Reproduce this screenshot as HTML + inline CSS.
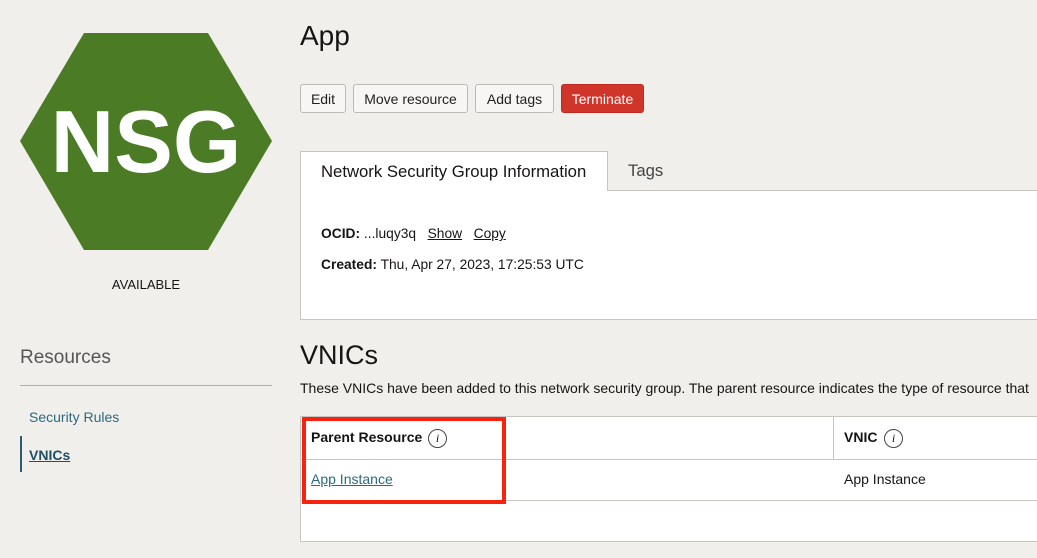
<!DOCTYPE html>
<html><head><style>
body{margin:0;width:1037px;height:558px;background:#f0efec;font-family:"Liberation Sans",sans-serif;position:relative;overflow:hidden;color:#161513}
.a{position:absolute}
.btn{position:absolute;top:84px;height:29px;border:1px solid #bdbab5;border-radius:3px;background:#f7f6f4;font-size:14px;line-height:29px;text-align:center;color:#222;box-sizing:border-box}
</style></head><body>
<svg class="a" style="left:0;top:0" width="290" height="260"><polygon points="20,141 84,33 208,33 272,141 208,250 84,250" fill="#4b7b24"/>
<text x="146" y="172" font-family="Liberation Sans" font-weight="bold" font-size="88" fill="#fff" text-anchor="middle">NSG</text></svg>
<div class="a" style="left:0;width:292px;top:277px;text-align:center;font-size:13px">AVAILABLE</div>
<div class="a" style="left:20px;top:347px;font-size:19px;color:#555">Resources</div>
<div class="a" style="left:20px;top:385px;width:252px;height:1px;background:#b3b0ab"></div>
<div class="a" style="left:29px;top:409px;font-size:14px;color:#2b6a80">Security Rules</div>
<div class="a" style="left:20px;top:436px;width:2px;height:36px;background:#2b5e72"></div>
<div class="a" style="left:29px;top:447px;font-size:14px;font-weight:bold;color:#1f4f64;text-decoration:underline">VNICs</div>
<div class="a" style="left:300px;top:20px;font-size:28px">App</div>
<div class="btn" style="left:300px;width:46px">Edit</div>
<div class="btn" style="left:353px;width:115px">Move resource</div>
<div class="btn" style="left:475px;width:79px">Add tags</div>
<div class="btn" style="left:561px;width:83px;background:#d0352a;border-color:#c02a20;color:#fff">Terminate</div>
<div class="a" style="left:300px;top:190px;width:740px;height:130px;background:#fff;border:1px solid #c8c5c0;box-sizing:border-box"></div>
<div class="a" style="left:300px;top:151px;width:308px;height:40px;background:#fff;border:1px solid #c8c5c0;border-bottom:none;box-sizing:border-box;font-size:16.7px;line-height:40px;padding-left:20px;white-space:nowrap">Network Security Group Information</div>
<div class="a" style="left:628px;top:161px;font-size:16.7px;color:#444">Tags</div>
<div class="a" style="left:321px;top:226px;font-size:13.8px"><b>OCID:</b> ...luqy3q &nbsp; <u>Show</u> &nbsp; <u>Copy</u></div>
<div class="a" style="left:321px;top:257px;font-size:13.8px"><b>Created:</b> Thu, Apr 27, 2023, 17:25:53 UTC</div>
<div class="a" style="left:300px;top:340px;font-size:27px">VNICs</div>
<div class="a" style="left:300px;top:380px;font-size:14px;white-space:nowrap">These VNICs have been added to this network security group. The parent resource indicates the type of resource that</div>
<div class="a" style="left:300px;top:416px;width:740px;height:126px;background:#fff;border:1px solid #c8c5c0;box-sizing:border-box"></div>
<div class="a" style="left:300px;top:459px;width:740px;height:1px;background:#c8c5c0"></div>
<div class="a" style="left:300px;top:500px;width:740px;height:1px;background:#c8c5c0"></div>
<div class="a" style="left:833px;top:416px;width:1px;height:44px;background:#c8c5c0"></div>
<div class="a" style="left:311px;top:429px;font-size:14px;font-weight:bold">Parent Resource</div>
<div class="a" style="left:428px;top:429px;width:17px;height:17px;border:1px solid #444;border-radius:50%;font-size:12px;font-style:italic;text-align:center;line-height:17px;font-family:'Liberation Serif'">i</div>
<div class="a" style="left:844px;top:429px;font-size:14px;font-weight:bold">VNIC</div>
<div class="a" style="left:884px;top:429px;width:17px;height:17px;border:1px solid #444;border-radius:50%;font-size:12px;font-style:italic;text-align:center;line-height:17px;font-family:'Liberation Serif'">i</div>
<div class="a" style="left:311px;top:471px;font-size:14px;color:#2b6a80;text-decoration:underline">App Instance</div>
<div class="a" style="left:844px;top:471px;font-size:14px">App Instance</div>
<div class="a" style="left:302px;top:417px;width:204px;height:87px;border:4px solid #f5230f;box-sizing:border-box"></div>
</body></html>
